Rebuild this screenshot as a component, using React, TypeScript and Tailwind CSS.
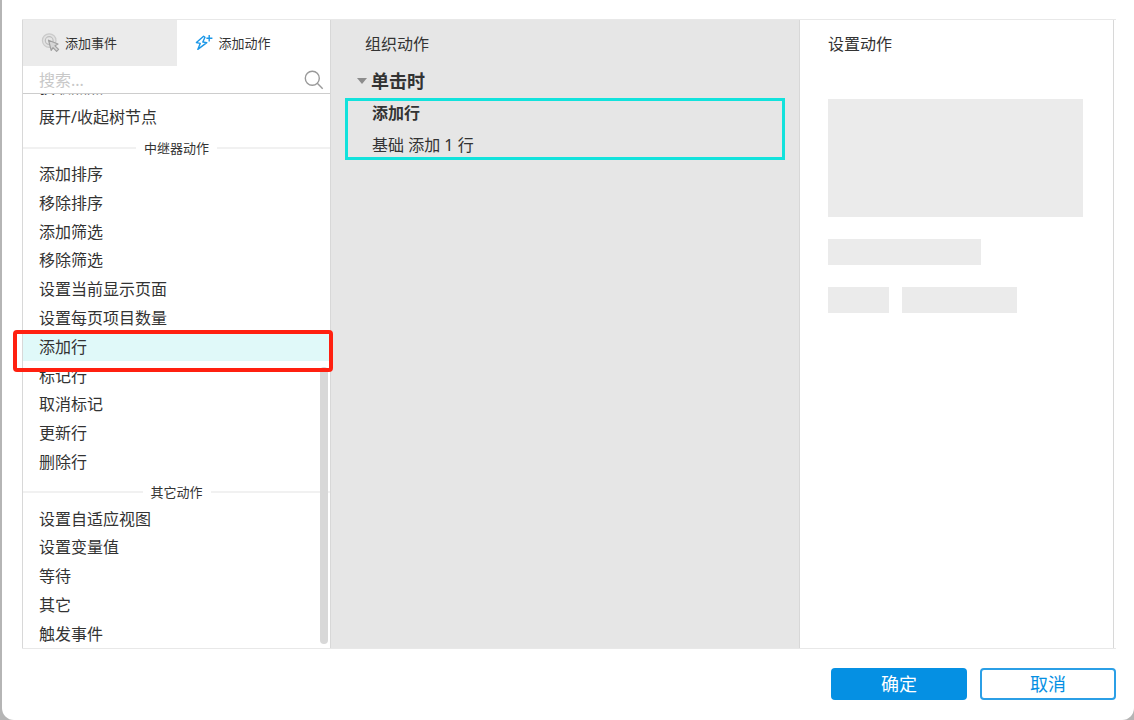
import React from "react";

const repeaterActions = [
  "添加排序",
  "移除排序",
  "添加筛选",
  "移除筛选",
  "设置当前显示页面",
  "设置每页项目数量",
  "添加行",
  "标记行",
  "取消标记",
  "更新行",
  "删除行",
];

const otherActions = ["设置自适应视图", "设置变量值", "等待", "其它", "触发事件"];

function EventIcon() {
  return (
    <svg width="20" height="20" viewBox="0 0 20 20" fill="none" aria-hidden="true">
      <circle cx="8.2" cy="7.6" r="6.8" fill="#e2e2e2" stroke="#cacaca" strokeWidth="1.2" />
      <circle cx="8.2" cy="7.6" r="3.9" fill="#e6e6e6" stroke="#bdbdbd" strokeWidth="1.2" />
      <path
        d="M7.5 7.2l9.5 3.8-3 1.8 3.6 3.6-2 2-3.6-3.8-1.8 2.8z"
        fill="#d6d6d6"
        stroke="#a0a0a0"
        strokeWidth="1.2"
        strokeLinejoin="round"
      />
    </svg>
  );
}

function ActionIcon() {
  return (
    <svg width="18" height="18" viewBox="0 0 18 18" fill="none" stroke="#1a97e8" aria-hidden="true">
      <path
        d="M8.6 2.2L1.4 8.6l3.8.8-2.4 6L11.8 8.6l-4-.6 2.2-4.8z"
        strokeWidth="1.4"
        strokeLinejoin="round"
      />
      <path d="M14.2 1v6.4M11.4 4.2h6" strokeWidth="1.4" />
    </svg>
  );
}

function Divider({ label }: { label: string }) {
  return (
    <li className="flex h-7 shrink-0 items-center gap-2 pt-1 text-[13px]">
      <span className="h-0.5 flex-1 bg-[#f1f1f1]" />
      <span>{label}</span>
      <span className="h-0.5 flex-1 bg-[#f1f1f1]" />
    </li>
  );
}

function ActionRow({ label, selected = false }: { label: string; selected?: boolean }) {
  return (
    <li className="relative flex flex-1">
      <button
        type="button"
        className={
          selected
            ? "flex flex-1 items-center bg-[#e0f9f9] px-4 text-left"
            : "flex flex-1 items-center px-4 text-left"
        }
      >
        {label}
      </button>
      {selected && (
        <span className="pointer-events-none absolute -top-0.5 -right-[3px] -left-2.5 z-10 h-[42px] rounded border-4 border-[#ff2010]" />
      )}
      {selected && (
        <span className="pointer-events-none absolute top-full right-0 left-0 h-1.5 bg-white" />
      )}
    </li>
  );
}

export default function App() {
  return (
    <div className="flex min-h-screen bg-[#b5b5b5] pl-0.5 font-['Noto_Sans','Noto_Sans_CJK_SC',sans-serif] text-base leading-5 text-[#333]">
      <main className="flex flex-1 flex-col rounded-b-xl bg-white pt-[19px] pr-[18px] pb-5 pl-5">
        <div className="flex flex-1 border-y border-[#e8e8e8] pr-0.5">
          <section className="flex w-[309px] shrink-0 flex-col border-x border-[#d8d8d8]">
            <div className="grid h-[46px] grid-cols-2 text-[13px]" role="tablist">
              <button
                type="button"
                role="tab"
                aria-selected="false"
                className="flex items-center gap-1 bg-[#ebebeb] pl-[18px]"
              >
                <EventIcon />
                添加事件
              </button>
              <button
                type="button"
                role="tab"
                aria-selected="true"
                className="flex items-center gap-1.5 pl-[18px]"
              >
                <ActionIcon />
                添加动作
              </button>
            </div>
            <label className="flex h-7 items-center border-b border-[#cdcdcd] pr-1.5 pl-4">
              <input
                type="text"
                aria-label="搜索"
                placeholder="搜索..."
                className="min-w-0 flex-1 bg-transparent outline-none placeholder:text-[#c8c8c8]"
              />
              <svg width="20" height="20" viewBox="0 0 20 20" fill="none" stroke="#999" strokeWidth="1.4" aria-hidden="true">
                <circle cx="8.3" cy="8.3" r="7" />
                <path d="M13.3 13.3l5.4 5.4" />
              </svg>
            </label>
            <div className="relative flex flex-1">
              <ul className="flex flex-1 flex-col">
                <li className="flex h-[9px] shrink-0 items-end overflow-hidden px-4 pb-1.5">
                  <span>获取焦点</span>
                </li>
                <ActionRow label="展开/收起树节点" />
                <Divider label="中继器动作" />
                {repeaterActions.map((label) => (
                  <ActionRow key={label} label={label} selected={label === "添加行"} />
                ))}
                <Divider label="其它动作" />
                {otherActions.map((label) => (
                  <ActionRow key={label} label={label} />
                ))}
              </ul>
              <div className="absolute right-0.5 bottom-1 h-1/2 w-2 rounded bg-[#d8d8d8]" />
            </div>
          </section>

          <section className="flex-1 bg-[#e6e6e6] px-3.5 pt-3">
            <h2 className="px-5 leading-6">组织动作</h2>
            <h3 className="mt-[13px] flex items-center gap-1 pl-3 text-lg leading-6 font-bold">
              <svg width="10" height="6" viewBox="0 0 10 6" fill="#8c8c8c" aria-hidden="true">
                <path d="M0 0h10L5 6z" />
              </svg>
              单击时
            </h3>
            <div className="mt-[5px] flex h-[62px] flex-col justify-between border-[3px] border-[#12e2dc] px-6">
              <strong className="leading-6">添加行</strong>
              <span className="leading-6">基础 添加 1 行</span>
            </div>
          </section>

          <section className="w-[315px] shrink-0 border-x border-[#d8d8d8] px-7 pt-3">
            <h2 className="leading-6">设置动作</h2>
            <div className="mt-[43px] h-[118px] w-[255px] bg-[#ebebeb]" />
            <div className="mt-[22px] h-[26px] w-[153px] bg-[#ebebeb]" />
            <div className="mt-[22px] flex gap-[13px]">
              <div className="h-[26px] w-[61px] bg-[#ebebeb]" />
              <div className="h-[26px] w-[115px] bg-[#ebebeb]" />
            </div>
          </section>
        </div>
        <footer className="mt-[19px] flex justify-end gap-[13px] text-lg">
          <button type="button" className="h-8 w-[136px] rounded bg-[#0590e3] text-white">
            确定
          </button>
          <button type="button" className="h-8 w-[136px] rounded border-2 border-[#2b9fe6] bg-white text-[#0590e3]">
            取消
          </button>
        </footer>
      </main>
    </div>
  );
}
